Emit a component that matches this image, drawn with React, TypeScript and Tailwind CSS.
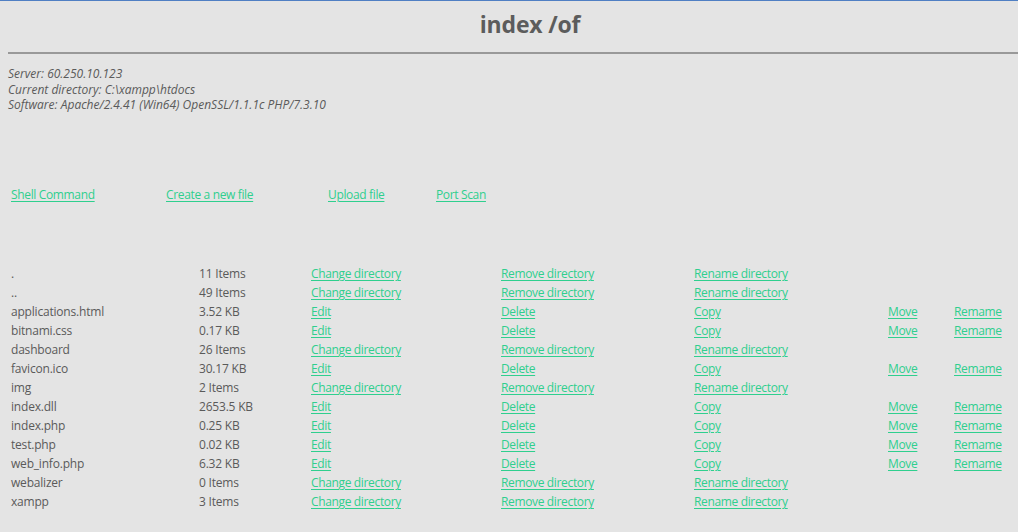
import React from 'react';

type Row = {
  name: string;
  size: string;
  dir: boolean;
};

const rows: Row[] = [
  { name: '.', size: '11 Items', dir: true },
  { name: '..', size: '49 Items', dir: true },
  { name: 'applications.html', size: '3.52 KB', dir: false },
  { name: 'bitnami.css', size: '0.17 KB', dir: false },
  { name: 'dashboard', size: '26 Items', dir: true },
  { name: 'favicon.ico', size: '30.17 KB', dir: false },
  { name: 'img', size: '2 Items', dir: true },
  { name: 'index.dll', size: '2653.5 KB', dir: false },
  { name: 'index.php', size: '0.25 KB', dir: false },
  { name: 'test.php', size: '0.02 KB', dir: false },
  { name: 'web_info.php', size: '6.32 KB', dir: false },
  { name: 'webalizer', size: '0 Items', dir: true },
  { name: 'xampp', size: '3 Items', dir: true },
];

const linkCls = 'text-[#2fcf8e] underline underline-offset-2 decoration-1 tracking-[-0.35px]';

const App: React.FC = () => {
  return (
    <div
      className="min-h-[532px] bg-[#e4e4e4] border-t border-[#4f7fc3] text-[#5a5a5a] text-[12px]"
      style={{ fontFamily: '"Open Sans", "Noto Sans", sans-serif' }}
    >
      <h1 className="text-center text-[23px] font-bold leading-none pt-[12px] pl-[42px] h-[51px] text-[#5c5c5c] tracking-[-0.2px]">index /of</h1>
      <div className="ml-2 border-t-2 border-[#999]" />

      <div className="pl-2 pt-[12px] italic leading-[15.5px]">
        <div>Server: 60.250.10.123</div>
        <div>Current directory: C:\xampp\htdocs</div>
        <div>Software: Apache/2.4.41 (Win64) OpenSSL/1.1.1c PHP/7.3.10</div>
      </div>

      <div className="flex pl-[11px] mt-[73px]">
        <a className={`${linkCls} w-[155px]`}>Shell Command</a>
        <a className={`${linkCls} w-[162px]`}>Create a new file</a>
        <a className={`${linkCls} w-[108px]`}>Upload file</a>
        <a className={linkCls}>Port Scan</a>
      </div>

      <div className="pl-[11px] mt-[61px] tracking-[-0.2px]">
        {rows.map(r => (
          <div key={r.name} className="grid grid-cols-[188px_112px_190px_193px_194px_66px_1fr] h-[19px] items-center">
            <span>{r.name}</span>
            <span>{r.size}</span>
            {r.dir ? (
              <>
                <span><a className={linkCls}>Change directory</a></span>
                <span><a className={linkCls}>Remove directory</a></span>
                <span><a className={linkCls}>Rename directory</a></span>
                <span />
                <span />
              </>
            ) : (
              <>
                <span><a className={linkCls}>Edit</a></span>
                <span><a className={linkCls}>Delete</a></span>
                <span><a className={linkCls}>Copy</a></span>
                <span><a className={linkCls}>Move</a></span>
                <span><a className={linkCls}>Remame</a></span>
              </>
            )}
          </div>
        ))}
      </div>
    </div>
  );
};

export default App;
